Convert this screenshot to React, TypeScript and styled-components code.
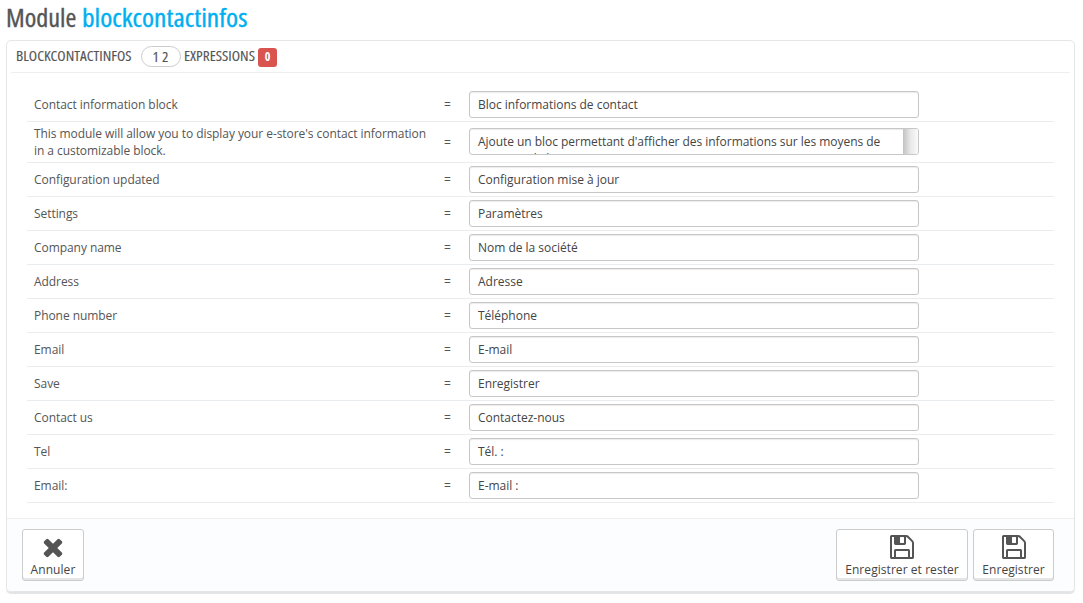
import React from "react";
import styled, { createGlobalStyle } from "styled-components";

const GlobalStyle = createGlobalStyle`
  * {
    box-sizing: border-box;
  }

  body {
    margin: 0;
    background: #fff;
    color: #555;
    font: 12px/17px "Open Sans", "Noto Sans", sans-serif;
  }
`;

const Page = styled.main`
  padding: 0 8px 0 6px;
  height: 603px;
`;

const Title = styled.h1`
  display: flex;
  margin: 0;
  height: 40px;
  padding-top: 3px;
  font-size: 25px;
  line-height: 28px;
  font-weight: 400;
  font-stretch: 75%;
  -webkit-text-stroke: 0.35px;
`;

// Condensed lettering, widened a little inside a box of fixed width.
const Narrow = styled.span<{ $width: number; $scale: number }>`
  display: block;
  flex: none;
  width: ${(p) => p.$width}px;
  white-space: nowrap;
  transform: scaleX(${(p) => p.$scale});
  transform-origin: 0 50%;
`;

const ModuleName = styled(Narrow)`
  color: #00aff0;
`;

const Panel = styled.section`
  display: flex;
  flex-direction: column;
  width: 1069px;
  height: 552px;
  border: 1px solid #e6e6e6;
  border-radius: 5px;
  box-shadow: 0 2px 0 #e3e4e5;
`;

const PanelHeading = styled.header`
  display: flex;
  align-items: center;
  height: 32px;
  margin: 0 4px;
  padding: 0 0 1px 5px;
  border-bottom: 1px solid #eee;
  font-size: 14px;
  font-weight: 400;
  font-stretch: 75%;
  -webkit-text-stroke: 0.12px;
`;

const HeadingText = styled(Narrow)`
  padding-bottom: 2px;
`;

const Count = styled.span`
  width: 40px;
  height: 21px;
  margin-right: 3px;
  padding-left: 2px;
  border: 1px solid #ccc;
  border-radius: 11px;
  font-size: 15px;
  line-height: 18px;
  letter-spacing: 3px;
  text-align: center;
`;

const Missing = styled.span`
  width: 19px;
  height: 19px;
  margin-top: 2px;
  border-radius: 3px;
  background: #d9534f;
  color: #fff;
  font-size: 12px;
  line-height: 18px;
  font-weight: 700;
  text-align: center;
  -webkit-text-stroke: 0;
`;

const Table = styled.div`
  margin: 15px 20px 0;
`;

const Row = styled.div`
  display: grid;
  grid-template-columns: 417px 25px 450px;
  align-items: center;
  min-height: 34px;
  padding: 3px 0;
  border-bottom: 1px solid #eaedef;
`;

const Label = styled.label`
  padding: 0 7px;
  letter-spacing: -0.06px;
`;

const Input = styled.div<{ $long?: boolean }>`
  height: 27px;
  display: flex;
  margin-bottom: ${(p) => (p.$long ? "1px" : "0")};
  border: 1px solid #c7c7c7;
  border-radius: 3px;
  box-shadow: inset 0 1px 1px rgba(0, 0, 0, 0.08);
  overflow: hidden;
  color: #444;
  letter-spacing: ${(p) => (p.$long ? "-0.04px" : "-0.02px")};
`;

const Value = styled.span`
  flex: 1;
  padding: 4px 8px;
`;

const ScrollTrack = styled.span`
  width: 15px;
  background: linear-gradient(90deg, #c2c2c2, #e8e8e8 50%, #fafafa);
`;

const Footer = styled.footer`
  display: flex;
  gap: 5px;
  height: 73px;
  margin-top: auto;
  padding: 10px 20px 0 15px;
  border-top: 1px solid #eee;
  border-radius: 0 0 4px 4px;
  background: #fcfdfe;
`;

const Button = styled.button<{ $width: number; $end?: boolean }>`
  display: flex;
  flex-direction: column;
  align-items: center;
  width: ${(p) => p.$width}px;
  height: 52px;
  margin: 0 0 0 ${(p) => (p.$end ? "auto" : "0")};
  padding: 5px 0 0;
  border: 1px solid #ccc;
  border-radius: 3px;
  box-shadow: inset 0 -2px 0 #e6e6e6;
  background: #fff;
  color: #444;
  font: inherit;
  letter-spacing: 0.06px;
  white-space: nowrap;

  svg {
    flex: none;
    width: 24px;
    height: 24px;
    margin-bottom: 2px;
    fill: #555;
  }
`;

const CloseIcon = () => (
  <svg viewBox="128 128 1536 1536">
    <path d="M1490 1322q0 40-28 68l-136 136q-28 28-68 28t-68-28l-294-294-294 294q-28 28-68 28t-68-28l-136-136q-28-28-28-68t28-68l294-294-294-294q-28-28-28-68t28-68l136-136q28-28 68-28t68 28l294 294 294-294q28-28 68-28t68 28l136 136q28 28 28 68t-28 68l-294 294 294 294q28 28 28 68z" />
  </svg>
);

const SaveIcon = () => (
  <svg viewBox="0 0 1536 1536">
    <path d="M384 1408h768v-384h-768v384zm896 0h128v-896q0-14-10-38.5t-20-34.5l-281-281q-10-10-34-20t-39-10v416q0 40-28 68t-68 28h-576q-40 0-68-28t-28-68v-416h-128v1280h128v-416q0-40 28-68t68-28h832q40 0 68 28t28 68v416zm-384-928v-320q0-13-9.5-22.5t-22.5-9.5h-192q-13 0-22.5 9.5t-9.5 22.5v320q0 13 9.5 22.5t22.5 9.5h192q13 0 22.5-9.5t9.5-22.5zm640 32v928q0 40-28 68t-68 28h-1344q-40 0-68-28t-28-68v-1344q0-40 28-68t68-28h928q40 0 88 20t76 48l280 280q28 28 48 76t20 88z" />
  </svg>
);

type Expression = { source: string; value: string; long?: boolean };

const expressions: Expression[] = [
  { source: "Contact information block", value: "Bloc informations de contact" },
  {
    source:
      "This module will allow you to display your e-store's contact information in a customizable block.",
    value:
      "Ajoute un bloc permettant d'afficher des informations sur les moyens de contacter la boutique",
    long: true,
  },
  { source: "Configuration updated", value: "Configuration mise à jour" },
  { source: "Settings", value: "Paramètres" },
  { source: "Company name", value: "Nom de la société" },
  { source: "Address", value: "Adresse" },
  { source: "Phone number", value: "Téléphone" },
  { source: "Email", value: "E-mail" },
  { source: "Save", value: "Enregistrer" },
  { source: "Contact us", value: "Contactez-nous" },
  { source: "Tel", value: "Tél. :" },
  { source: "Email:", value: "E-mail :" },
];

export default function App() {
  return (
    <Page>
      <GlobalStyle />
      <Title>
        <Narrow $width={76} $scale={1.05}>
          Module
        </Narrow>
        <ModuleName $width={170} $scale={1.1}>
          blockcontactinfos
        </ModuleName>
      </Title>
      <Panel>
        <PanelHeading>
          <HeadingText $width={125} $scale={1.09}>
            BLOCKCONTACTINFOS
          </HeadingText>
          <Count>12</Count>
          <HeadingText $width={74} $scale={1.09}>
            EXPRESSIONS
          </HeadingText>
          <Missing>0</Missing>
        </PanelHeading>
        <Table>
          {expressions.map(({ source, value, long }) => (
            <Row key={source}>
              <Label>{source}</Label>
              <span>=</span>
              <Input $long={long}>
                <Value>{value}</Value>
                {long && <ScrollTrack />}
              </Input>
            </Row>
          ))}
        </Table>
        <Footer>
          <Button $width={62}>
            <CloseIcon />
            Annuler
          </Button>
          <Button $width={132} $end>
            <SaveIcon />
            Enregistrer et rester
          </Button>
          <Button $width={81}>
            <SaveIcon />
            Enregistrer
          </Button>
        </Footer>
      </Panel>
    </Page>
  );
}
